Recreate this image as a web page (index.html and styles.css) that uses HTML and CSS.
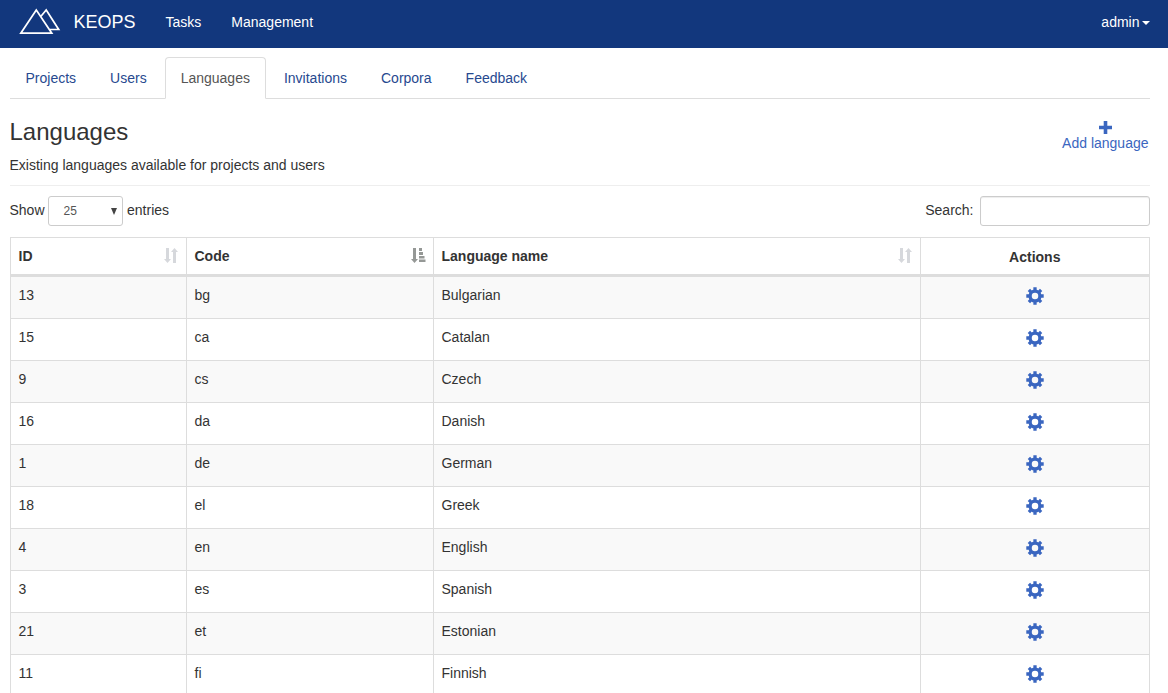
FILE: index.html
```html
<!DOCTYPE html>
<html lang="en">
<head>
<meta charset="utf-8">
<title>KEOPS - Languages</title>
<link rel="stylesheet" href="styles.css">
</head>
<body>
<svg class="defs" aria-hidden="true">
  <symbol id="gear" viewBox="-9 -9 18 18">
    <g fill="none" stroke="#3a66c0">
      <circle r="4.900" stroke-width="3.300"/>
      <path stroke-width="3.300" d="M0-6v-2.700M0 6v2.700M-6 0h-2.700M6 0h2.700M4.200-4.200l1.900-1.900M-4.200-4.200l-1.900-1.900M4.200 4.200l1.900 1.900M-4.200 4.200l-1.900 1.900"/>
    </g>
  </symbol>
  <symbol id="sort" viewBox="0 0 14 15">
    <path d="M2 0h3v11h2l-3.500 4L0 11h2zM9 15h3V4h2l-3.500-4L7 4h2z"/>
  </symbol>
  <symbol id="sort-asc" viewBox="0 0 15 15">
    <path d="M2 0h3v11h2l-3.500 4L0 11h2zM8 0h3v3H8zM8 4h4v3H8zM8 8h5.500v2.500H8zM8 11.500h6.500V14H8z"/>
  </symbol>
</svg>
<nav class="navbar">
  <a class="brand">
    <svg class="logo" width="42" height="28" viewBox="0 0 42 28"><path d="M17.300 2 1.800 25.200h31zM22 8.300 27.200 2l12.500 19.500H31"/></svg>
    <span>KEOPS</span>
  </a>
  <a class="nav-link">Tasks</a>
  <a class="nav-link">Management</a>
  <a class="user">admin<span class="caret"></span></a>
</nav>
<main class="page">
  <ul class="tabs">
    <li class="tab">Projects</li>
    <li class="tab">Users</li>
    <li class="tab active">Languages</li>
    <li class="tab">Invitations</li>
    <li class="tab">Corpora</li>
    <li class="tab">Feedback</li>
  </ul>
  <header class="heading">
    <div class="intro">
      <h1 class="title">Languages</h1>
      <p class="subtitle">Existing languages available for projects and users</p>
    </div>
    <a class="add">
      <svg width="13" height="13" viewBox="0 0 13 13"><path d="M4.700 0h3.600v4.700H13v3.600H8.300V13H4.700V8.300H0V4.700h4.700z"/></svg>
      <span>Add language</span>
    </a>
  </header>
  <div class="controls">
    <label class="length">Show <span class="select"><span>25</span><svg width="6" height="7" viewBox="0 0 6 7"><path d="M0 0h6L3 7z"/></svg></span> entries</label>
    <label class="search">Search:<input class="search-input" type="text"></label>
  </div>
  <table class="grid">
    <colgroup><col class="col-id"><col class="col-code"><col class="col-name"><col class="col-actions"></colgroup>
    <thead>
      <tr>
        <th><div class="th">ID<svg class="sort" width="14" height="15"><use href="#sort"/></svg></div></th>
        <th><div class="th">Code<svg class="sort sorted" width="15" height="15"><use href="#sort-asc"/></svg></div></th>
        <th><div class="th">Language name<svg class="sort" width="14" height="15"><use href="#sort"/></svg></div></th>
        <th class="actions-head">Actions</th>
      </tr>
    </thead>
    <tbody>
      <tr><td>13</td><td>bg</td><td>Bulgarian</td><td><svg class="gear"><use href="#gear"/></svg></td></tr>
      <tr><td>15</td><td>ca</td><td>Catalan</td><td><svg class="gear"><use href="#gear"/></svg></td></tr>
      <tr><td>9</td><td>cs</td><td>Czech</td><td><svg class="gear"><use href="#gear"/></svg></td></tr>
      <tr><td>16</td><td>da</td><td>Danish</td><td><svg class="gear"><use href="#gear"/></svg></td></tr>
      <tr><td>1</td><td>de</td><td>German</td><td><svg class="gear"><use href="#gear"/></svg></td></tr>
      <tr><td>18</td><td>el</td><td>Greek</td><td><svg class="gear"><use href="#gear"/></svg></td></tr>
      <tr><td>4</td><td>en</td><td>English</td><td><svg class="gear"><use href="#gear"/></svg></td></tr>
      <tr><td>3</td><td>es</td><td>Spanish</td><td><svg class="gear"><use href="#gear"/></svg></td></tr>
      <tr><td>21</td><td>et</td><td>Estonian</td><td><svg class="gear"><use href="#gear"/></svg></td></tr>
      <tr><td>11</td><td>fi</td><td>Finnish</td><td><svg class="gear"><use href="#gear"/></svg></td></tr>
    </tbody>
  </table>
</main>
</body>
</html>
```
FILE: styles.css
```css
* { box-sizing: border-box; }
body {
  margin: 0;
  height: 693px;
  overflow: hidden;
  background: #fff;
  color: #333;
  font: 14px/20px "Liberation Sans", Arial, sans-serif;
}
.defs { display: none; }

.navbar {
  display: flex;
  align-items: center;
  height: 48px;
  padding: 0 18px 4px 19px;
  background: #12377d;
  color: #fff;
}
.brand { display: flex; align-items: center; gap: 12.5px; margin-right: 30px; font-size: 18px; }
.logo { fill: none; stroke: #fff; stroke-width: 1.7; }
.nav-link { margin-right: 30px; }
.user { display: flex; align-items: center; gap: 2px; margin-left: auto; }
.caret { width: 8.5px; border: 4.25px solid transparent; border-top: 4px solid #fff; border-bottom: 0; margin-top: 2px; }

.page { padding: 9px 18px 0 10px; }
.tabs {
  display: flex;
  gap: 2px;
  height: 42px;
  margin: 0;
  padding: 0;
  list-style: none;
  border-bottom: 1px solid #ddd;
}
.tab { height: 42px; padding: 10px 15.5px 10px 14.5px; border: 1px solid transparent; color: #27498f; }
.tab.active {
  color: #555;
  background: #fff;
  border-color: #ddd #ddd #fff;
  border-radius: 4px 4px 0 0;
}

.heading {
  display: flex;
  justify-content: space-between;
  height: 87px;
  padding-top: 20px;
  border-bottom: 1px solid #eee;
}
.intro { margin-left: -0.5px; }
.title { margin: 0; font-size: 24px; font-weight: 400; line-height: 26px; }
.subtitle { margin: 10px 0 0; }
.add {
  display: flex;
  flex-direction: column;
  align-items: center;
  height: 34px;
  margin: 2px 1.5px 0 0;
  color: #3a66c0;
}
.add svg { fill: #3a66c0; flex: none; }
.add span { line-height: 18px; }

.controls { display: flex; justify-content: space-between; height: 51px; padding-top: 10px; }
.length, .search { display: flex; height: 30px; line-height: 28px; }
.length { margin-left: -0.5px; }
.select {
  display: flex;
  align-items: center;
  justify-content: space-between;
  width: 75px;
  height: 30px;
  margin: 0 4px 0 3.5px;
  padding: 0 5px 0 14.5px;
  border: 1px solid #ccc;
  border-radius: 3px;
  color: #555;
  font-size: 12px;
}
.select svg { fill: #444; }
.search-input {
  width: 170px;
  height: 30px;
  margin: 0 0 0 6.5px;
  border: 1px solid #ccc;
  border-radius: 3px;
  box-shadow: inset 0 1px 1px rgba(0, 0, 0, .075);
}

.grid {
  width: 1140px;
  table-layout: fixed;
  border-collapse: separate;
  border-spacing: 0;
  border: solid #ddd;
  border-width: 1px 0 0 1px;
}
.col-id { width: 176px; }
.col-code { width: 247px; }
.col-name { width: 487px; }
.col-actions { width: 229px; }
.grid th, .grid td {
  padding: 8px 8px 8px 7.5px;
  border: solid #ddd;
  border-width: 0 1px 1px 0;
  text-align: left;
  vertical-align: top;
}
.grid th { height: 39px; border-bottom-width: 3px; }
.grid td { height: 42px; }
.grid tbody tr:nth-child(odd) { background: #f9f9f9; }
.th { display: flex; justify-content: space-between; }
.sort { margin-top: 2px; fill: #d6d8dc; }
.sorted { margin-right: -1px; fill: #959896; }
.grid .actions-head { padding-top: 9px; padding-bottom: 7px; text-align: center; }
.grid td:last-child { padding-top: 10px; }
.gear { display: block; width: 18px; height: 18px; margin: 0 auto; }
```
